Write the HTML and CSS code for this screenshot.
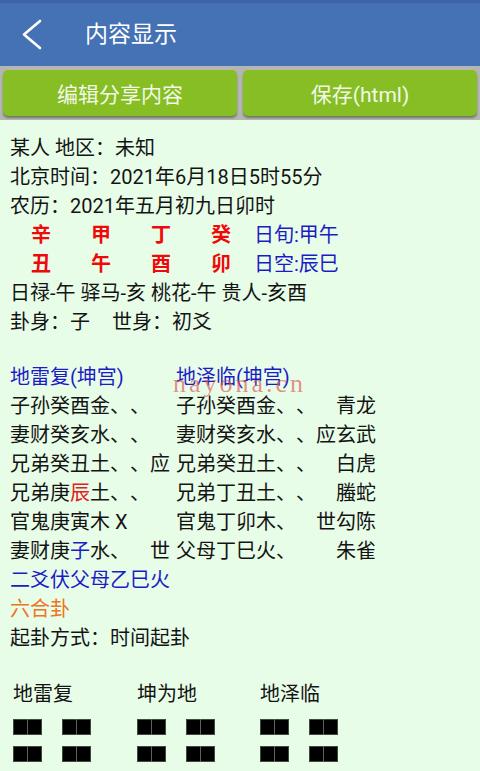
FILE: index.html
```html
<!DOCTYPE html>
<html lang="zh-CN">
<head>
<meta charset="utf-8">
<title>内容显示</title>
<link rel="stylesheet" href="styles.css">
</head>
<body>
<div class="page">
  <header class="appbar">
    <svg class="back" width="24" height="32" viewBox="0 0 24 32">
      <polyline points="19,2 3,15.5 19,29" fill="none" stroke="#fff" stroke-width="2.6" stroke-linecap="round" stroke-linejoin="round"/>
    </svg>
    <div class="title">内容显示</div>
  </header>
  <div class="toolbar">
    <button class="btn">编辑分享内容</button>
    <button class="btn">保存(html)</button>
  </div>
  <main class="content">
    <div class="line">某人 地区：未知</div>
    <div class="line">北京时间：2021年6月18日5时55分</div>
    <div class="line">农历：2021年五月初九日卯时</div>
    <div class="line gz">
      <span class="red b">辛</span><span class="red b">甲</span><span class="red b">丁</span><span class="red b">癸</span><span class="blue">日旬:甲午</span>
    </div>
    <div class="line gz">
      <span class="red b">丑</span><span class="red b">午</span><span class="red b">酉</span><span class="red b">卯</span><span class="blue">日空:辰巳</span>
    </div>
    <div class="line">日禄-午 驿马-亥 桃花-午 贵人-亥酉</div>
    <div class="line">卦身：子<span class="sp"></span>世身：初爻</div>
    <div class="blank"></div>

    <div class="yao blue">
      <span>地雷复(坤宫)</span><span>地泽临(坤宫)</span><span></span>
    </div>
    <div class="yao">
      <span>子孙癸酉金、、</span><span>子孙癸酉金、、</span><span class="r">青龙</span>
    </div>
    <div class="yao">
      <span>妻财癸亥水、、</span><span>妻财癸亥水、、</span><span class="r">应玄武</span>
    </div>
    <div class="yao">
      <span>兄弟癸丑土、、应</span><span>兄弟癸丑土、、</span><span class="r">白虎</span>
    </div>
    <div class="yao">
      <span>兄弟庚<span class="red2">辰</span>土、、</span><span>兄弟丁丑土、、</span><span class="r">螣蛇</span>
    </div>
    <div class="yao">
      <span>官鬼庚寅木 X</span><span>官鬼丁卯木、</span><span class="r">世勾陈</span>
    </div>
    <div class="yao">
      <span class="c1">妻财庚<span class="blue">子</span>水、<span class="mark">世</span></span><span>父母丁巳火、</span><span class="r">朱雀</span>
    </div>
    <div class="line blue">二爻伏父母乙巳火</div>
    <div class="line orange">六合卦</div>
    <div class="line">起卦方式：时间起卦</div>

    <div class="hexes">
      <div class="hex">
        <div class="hname">地雷复</div>
        <div class="yin"><i></i><i></i></div>
        <div class="yin"><i></i><i></i></div>
      </div>
      <div class="hex">
        <div class="hname">坤为地</div>
        <div class="yin"><i></i><i></i></div>
        <div class="yin"><i></i><i></i></div>
      </div>
      <div class="hex">
        <div class="hname">地泽临</div>
        <div class="yin"><i></i><i></i></div>
        <div class="yin"><i></i><i></i></div>
      </div>
    </div>

    <div class="watermark">nayona.cn</div>
  </main>
</div>
</body>
</html>
```

FILE: styles.css
```css
html, body {
  margin: 0;
  padding: 0;
}
body {
  width: 480px;
  height: 771px;
  overflow: hidden;
  background: #e8fde8;
  font-family: Roboto, "Noto Sans CJK SC", sans-serif;
  color: #141414;
  text-spacing-trim: space-all;
}
.page {
  width: 480px;
}
.appbar {
  height: 66px;
  background: #4572b5;
  border-top: 3px solid #3d65a6;
  box-sizing: border-box;
  display: flex;
  align-items: center;
}
.back {
  margin-left: 21px;
  margin-top: 1px;
}
.title {
  margin-left: 40px;
  color: #fff;
  font-size: 23px;
  line-height: 30px;
  margin-top: 1px;
}
.toolbar {
  height: 54px;
  background: #b5b6b3;
  box-sizing: border-box;
  padding: 4px 3px 4px 3px;
  display: flex;
  gap: 6px;
}
.btn {
  flex: 1;
  height: 46px;
  border: none;
  border-radius: 5px;
  background: #86be24;
  color: #f2f9e6;
  font-family: Roboto, "Noto Sans CJK SC", sans-serif;
  font-size: 21px;
  padding: 0;
  box-shadow: 0 2px 2px rgba(60, 70, 40, 0.55);
}
.content {
  position: relative;
  padding: 14px 0 0 10px;
  font-size: 20px;
}
.line {
  height: 29px;
  line-height: 29px;
  white-space: pre;
}
.gz {
  display: grid;
  grid-template-columns: 60px 60px 60px 43px auto;
  margin-left: 21px;
}
.b {
  font-weight: bold;
}
.red {
  color: #ee0a0a;
}
.red2 {
  color: #e02020;
}
.blue {
  color: #1c1cc6;
}
.orange {
  color: #ec7422;
}
.sp {
  display: inline-block;
  width: 22px;
}
.blank {
  height: 26px;
}
.yao {
  display: grid;
  grid-template-columns: 166px 140px 60px;
  height: 29px;
  line-height: 29px;
  white-space: pre;
}
.yao .r {
  text-align: right;
}
.c1 {
  display: flex;
  width: 160px;
}
.mark {
  margin-left: auto;
}
.hexes {
  display: grid;
  grid-template-columns: 124px 123px 123px;
  margin: 27px 0 0 3px;
}
.hname {
  height: 29px;
  line-height: 29px;
  font-size: 20px;
  margin-bottom: 10px;
}
.yin {
  display: flex;
  gap: 20px;
  margin-bottom: 11px;
}
.yin i {
  display: block;
  width: 29px;
  height: 16px;
  background: #000;
  box-shadow: inset 0 0 0 1px #3e4a3e;
  position: relative;
}
.yin i::after {
  content: "";
  position: absolute;
  left: 14px;
  top: 0;
  width: 1px;
  height: 16px;
  background: #5a645a;
}
.watermark {
  position: absolute;
  left: 173px;
  top: 249px;
  font-family: "Liberation Serif", serif;
  font-size: 26px;
  letter-spacing: 3px;
  color: rgba(226, 80, 80, 0.65);
  line-height: 30px;
}
```
